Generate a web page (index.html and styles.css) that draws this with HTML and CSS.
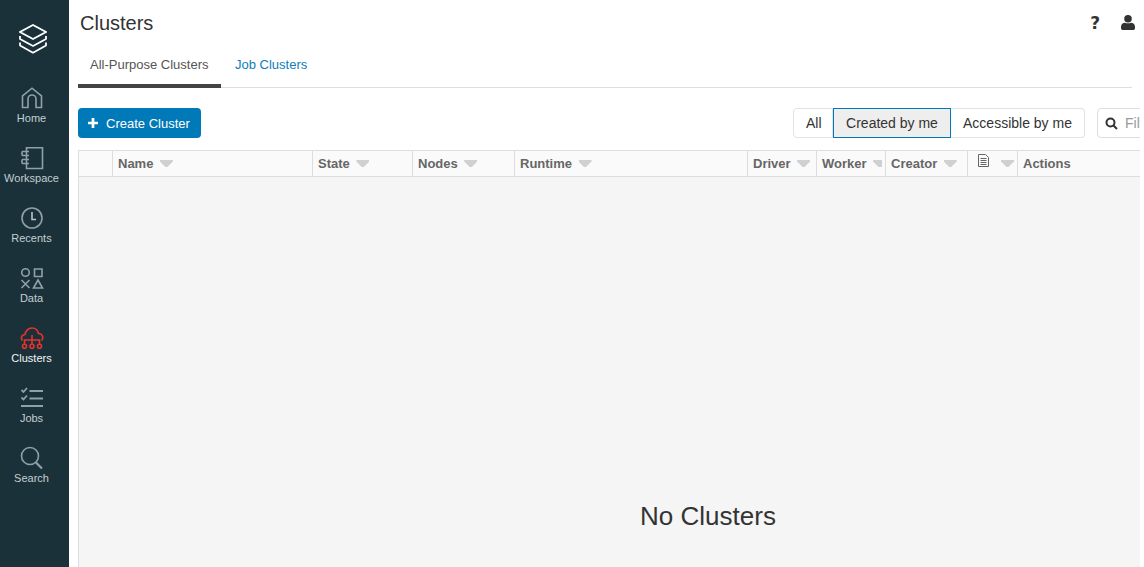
FILE: index.html
```html
<!DOCTYPE html>
<html lang="en">
<head>
<meta charset="utf-8">
<title>Clusters</title>
<link rel="stylesheet" href="styles.css">
</head>
<body>
<div class="app">
  <nav class="side">
    <div class="logo">
      <svg width="28" height="30" viewBox="0 0 28 30" fill="none" stroke="#fff" stroke-width="1.800">
        <path d="M14 1 27 8 14 15 1 8Z"/>
        <path d="M1 12v3L14 22l13-7v-3" stroke-linejoin="bevel"/>
        <path d="M1 18.500v3L14 28.800l13-7.300v-3" stroke-linejoin="bevel"/>
      </svg>
    </div>
    <a class="item"><svg class="ic" width="24" height="24" viewBox="0 0 24 24" fill="none" stroke="#8fa1a8" stroke-width="1.600"><path d="M2.500 21.500V10L12 2.200 21.500 10v11.500H16V13a4 4 0 0 0-8 0v8.500Z"/></svg><span>Home</span></a>
    <a class="item"><svg class="ic" width="24" height="24" viewBox="0 0 24 24" fill="none" stroke="#8fa1a8" stroke-width="1.600"><path d="M6.500 1.800H22.500V22.500H6.500Z"/><path d="M2 5.500H9M2 9.500H9M2 13.500H9M2 17.500H9M2 5.500V9.500M2 13.500V17.500"/></svg><span>Workspace</span></a>
    <a class="item"><svg class="ic" width="24" height="24" viewBox="0 0 24 24" fill="none" stroke="#8fa1a8" stroke-width="1.600"><circle cx="12" cy="12" r="10"/><path d="M12 6V13.500H16" stroke="#b8c5ca"/></svg><span>Recents</span></a>
    <a class="item"><svg class="ic" width="24" height="24" viewBox="0 0 24 24" fill="none" stroke="#8fa1a8" stroke-width="1.600"><circle cx="5.500" cy="6.500" r="3.800"/><path d="M14.500 3H22V10.500H14.500Z"/><path d="M1.500 14l8 8M9.500 14l-8 8"/><path d="M18 14 22.500 22H13.500Z"/></svg><span>Data</span></a>
    <a class="item active"><svg class="ic" width="24" height="24" viewBox="0 0 24 24" fill="none" stroke="#e8322e" stroke-width="1.600"><path d="M2.500 14.500C.5 12.500 1.500 8.500 5 8.500 5.500 5 8.500 2 12 2c3.500 0 6 2.500 6.500 5.500 4 0 5.500 4.500 3 7"/><path d="M4.500 18v-4h15v4M12 9v9"/><circle cx="4.500" cy="20.200" r="2"/><circle cx="12" cy="20.200" r="2"/><circle cx="19.500" cy="20.200" r="2"/></svg><span>Clusters</span></a>
    <a class="item"><svg class="ic" width="24" height="24" viewBox="0 0 24 24" fill="none" stroke="#8fa1a8" stroke-width="2.200"><path d="M1.500 4 3.500 6 7 2M1.500 11.500 3.500 13.500 7 9.500" stroke-width="1.800"/><path d="M9.500 5H23M9.500 12.500H23M1 20H23"/></svg><span>Jobs</span></a>
    <a class="item"><svg class="ic" width="24" height="24" viewBox="0 0 24 24" fill="none" stroke="#8fa1a8" stroke-width="1.600"><circle cx="10" cy="10" r="8.500"/><path d="M16 16.500 22 22.500" stroke-width="2.200"/></svg><span>Search</span></a>
  </nav>
  <main class="main">
    <header class="top">
      <h1 class="title">Clusters</h1>
      <div class="top-icons">
        <span class="help">?</span>
        <svg class="user" width="14" height="15" viewBox="0 0 14 16" preserveAspectRatio="none" fill="#333"><ellipse cx="7" cy="4" rx="3.800" ry="4"/><path d="M0 12.500C0 9.500 2 8.500 4 8.200 5 9 9 9 10 8.200c2 .3 4 1.300 4 4.300V14c0 1-1 2-2 2H2c-1 0-2-1-2-2Z"/></svg>
      </div>
    </header>
    <div class="tabs">
      <a class="tab current">All-Purpose Clusters</a>
      <a class="tab link">Job Clusters</a>
    </div>
    <div class="toolbar">
      <button class="create"><svg width="10" height="10" viewBox="0 0 11 11" fill="#fff"><path d="M4 0h3v4h4v3H7v4H4V7H0V4h4Z"/></svg>Create Cluster</button>
      <div class="filters">
        <button class="seg first">All</button>
        <button class="seg on">Created by me</button>
        <button class="seg last">Accessible by me</button>
      </div>
      <div class="search">
        <svg width="13" height="13" viewBox="0 0 13 13" fill="none" stroke="#333" stroke-width="2"><circle cx="5.500" cy="5.500" r="4"/><path d="M8.500 8.500 12 12"/></svg>
        <span>Filter</span>
      </div>
    </div>
    <section class="table">
      <div class="thead">
        <div class="th w-check"></div>
        <div class="th w-name">Name<i class="sort"></i></div>
        <div class="th w-state">State<i class="sort"></i></div>
        <div class="th w-nodes">Nodes<i class="sort"></i></div>
        <div class="th w-runtime">Runtime<i class="sort"></i></div>
        <div class="th w-driver">Driver<i class="sort"></i></div>
        <div class="th w-worker">Worker<i class="sort clip"></i></div>
        <div class="th w-creator">Creator<i class="sort"></i></div>
        <div class="th w-doc"><svg class="doc" width="11" height="13" viewBox="0 0 11 13" fill="none" stroke="#666"><path d="M.5.500H7.500L10.500 3.500V12.500H.5Z"/><path d="M2.500 4.500H8.500M2.500 6.500H8.500M2.500 8.500H8.500M2.500 10.500H8.500"/></svg><i class="sort"></i></div>
        <div class="th w-actions">Actions</div>
      </div>
      <div class="tbody"><p class="empty">No Clusters</p></div>
    </section>
  </main>
</div>
</body>
</html>
```
FILE: styles.css
```css
* { box-sizing: border-box; }
html, body { margin: 0; height: 100%; overflow: hidden; background: #fff; }
body { font-family: "Liberation Sans", Arial, sans-serif; color: #333; }
.app { display: flex; height: 567px; width: 1144px; overflow: hidden; }
.side { width: 69px; flex: none; background: #1b3139; display: flex; flex-direction: column; align-items: center; padding-right: 6px; }
.logo { height: 68px; padding-top: 24px; padding-left: 2px; display: flex; justify-content: center; width: 100%; }
.logo svg { display: block; }
.item { height: 60px; width: 100%; display: flex; flex-direction: column; align-items: center; padding-top: 18px; color: #c3ced2; font-size: 11px; line-height: 13px; }
.item .ic { display: block; margin-bottom: 2px; margin-left: 1px; flex: none; }
.item span { display: block; }
.item.active { color: #f2f5f6; }
.main { width: 1071px; flex: none; overflow: hidden; padding-left: 9px; }
.top { height: 45px; width: 1062px; display: flex; justify-content: space-between; align-items: flex-start; padding-left: 2px; }
.title { margin: 12px 0 0; font-size: 20px; line-height: 23px; font-weight: 400; color: #333; }
.top-icons { display: flex; align-items: center; gap: 21px; margin-top: 14px; margin-right: 5px; height: 18px; }
.help { font-family: "DejaVu Sans", sans-serif; font-size: 17px; font-weight: 700; line-height: 18px; color: #333; }
.user { display: block; margin-top: -1px; }
.tabs { display: flex; width: 1054px; height: 43px; border-bottom: 1px solid #ddd; }
.tab { display: block; height: 43px; padding: 12px 12px 0; font-size: 13px; line-height: 15px; }
.tab.current { color: #555; border-bottom: 4px solid #444; width: 143px; margin-right: 2px; }
.tab.link { color: #0f7dba; }
.toolbar { display: flex; align-items: stretch; margin-top: 20px; height: 30px; width: 1100px; }
.create { display: flex; align-items: center; gap: 8px; flex: none; width: 123px; padding: 0 0 0 10px; border: 0; border-radius: 4px; background: #0079b8; color: #fff; white-space: nowrap; font: 13px "Liberation Sans", Arial, sans-serif; }
.filters { display: flex; margin-left: 592px; flex: none; }
.seg { height: 30px; padding: 0 12px; background: #fff; border: 1px solid #e2e2e2; border-left-width: 0; white-space: nowrap; font: 14px "Liberation Sans", Arial, sans-serif; color: #333; }
.seg.first { border-left-width: 1px; border-radius: 4px 0 0 4px; width: 40px; }
.seg.on { background: #eee; border: 1px solid #0079b8; width: 118px; }
.seg.last { border-radius: 0 4px 4px 0; width: 134px; }
.search { margin-left: 12px; width: 120px; flex: none; display: flex; align-items: center; gap: 7px; padding-left: 7px; border: 1px solid #ddd; border-radius: 4px; color: #999; font-size: 14px; }
.table { margin-top: 12px; width: 1090px; height: 430px; border: 1px solid #ddd; display: flex; flex-direction: column; }
.thead { display: flex; height: 26px; flex: none; background: #fafafa; border-bottom: 1px solid #ddd; }
.th { display: flex; align-items: center; padding-left: 5px; font-size: 13px; font-weight: 700; color: #666; border-right: 1px solid #ddd; height: 25px; flex: none; overflow: hidden; white-space: nowrap; }
.sort { display: block; flex: none; width: 13px; height: 7px; margin-left: 6.500px; background: #d0d0d0; clip-path: polygon(0 0, 100% 0, 100% 20%, 58% 100%, 42% 100%, 0 20%); }
.sort.clip { width: 9px; clip-path: polygon(0 0, 100% 0, 100% 100%, 60% 100%, 0 20%); }
.w-check { width: 34px; }
.w-name { width: 200px; }
.w-state { width: 100px; }
.w-nodes { width: 102px; }
.w-runtime { width: 233px; }
.w-driver { width: 69px; }
.w-worker { width: 69px; }
.w-creator { width: 82px; }
.w-doc { width: 50px; padding-left: 10px; }
.w-doc .doc { margin-top: -7px; }
.w-doc .sort { margin-left: 12px; }
.w-actions { border-right: 0; width: 110px; }
.tbody { flex: 1; background: #f5f5f5; padding-top: 323px; }
.empty { margin: 0; width: 1258px; text-align: center; font-size: 26px; line-height: 32px; color: #333; }
```
